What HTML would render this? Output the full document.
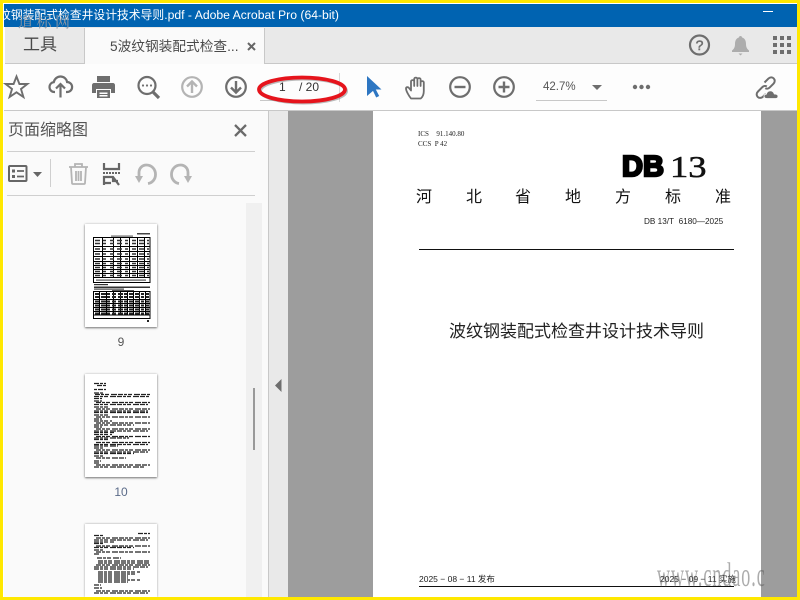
<!DOCTYPE html>
<html lang="zh">
<head>
<meta charset="utf-8">
<title>Acrobat</title>
<style>
html,body{margin:0;padding:0;width:800px;height:600px;overflow:hidden;background:#fff}
body{position:relative;font-family:"Liberation Sans","Noto Sans CJK SC",sans-serif;color:#4b4b4b}
.a{position:absolute;white-space:nowrap}
svg{position:absolute;overflow:visible}
.i{fill:none;stroke:#6e6e6e;stroke-width:2.2}
.l{color:#222}
.h{font-size:16px;line-height:20px;top:185px;font-family:"Noto Sans CJK SC",sans-serif;font-weight:400;color:#111}
</style>
</head>
<body>
<!-- Title bar -->
<div class="a" style="left:4px;top:4px;width:793px;height:23px;background:#0063b1;overflow:hidden">
  <div class="a" style="right:458px;top:1px;font-size:12.200px;line-height:20px;color:#fff"><span style="font-size:11.800px">5波纹钢装配式检查井设计技术导则</span>.pdf - Adobe Acrobat Pro (64-bit)</div>
  <div class="a" style="left:759px;top:7px;width:10px;height:1px;background:#fff"></div>
</div>
<!-- Tab row -->
<div class="a" style="left:5px;top:27px;width:792px;height:36px;background:#e9e9e9"></div>
<div class="a" style="left:5px;top:63px;width:792px;height:1px;background:#c8c8c8"></div>
<div class="a" style="left:84px;top:28px;width:181px;height:36px;background:#fafafa;border-left:1px solid #c8c8c8;border-right:1px solid #c8c8c8;box-sizing:border-box"></div>
<div class="a" style="left:23px;top:33px;font-size:17px;line-height:24px;color:#4a4a4a">工具</div>
<div class="a" style="left:110px;top:37px;font-size:13.700px;line-height:20px;color:#4a4a4a">5波纹钢装配式检查...</div>
<svg style="left:247px;top:42px" width="9" height="9"><path d="M1 1L8 8M8 1L1 8" stroke="#666" stroke-width="2"/></svg>
<!-- Right tab icons -->
<svg style="left:688px;top:34px" width="24" height="24"><circle cx="11.500" cy="11" r="9.500" class="i"/><text x="11.500" y="16" font-size="14" text-anchor="middle" fill="#6e6e6e" stroke="#6e6e6e" stroke-width=".5" font-family="Liberation Sans">?</text></svg>
<svg style="left:731px;top:35px" width="20" height="22"><path d="M9.500 1c1 0 1.400.6 1.500 1.400C14 3.400 15 6 15 9c0 3 1 5 3 6.500V17H1v-1.500C3 14 4 12 4 9c0-3 1-5.600 4-6.600C8.100 1.600 8.500 1 9.500 1zM7.500 18.500h4L9.500 20.500z" fill="#adadad"/></svg>
<svg style="left:772px;top:36px" width="20" height="20" fill="#6e6e6e"><rect x="1" y="0" width="4" height="4"/><rect x="8" y="0" width="4" height="4"/><rect x="15" y="0" width="4" height="4"/><rect x="1" y="7" width="4" height="4"/><rect x="8" y="7" width="4" height="4"/><rect x="15" y="7" width="4" height="4"/><rect x="1" y="14" width="4" height="4"/><rect x="8" y="14" width="4" height="4"/><rect x="15" y="14" width="4" height="4"/></svg>
<!-- Toolbar -->
<div class="a" style="left:4px;top:64px;width:793px;height:46px;background:#fdfdfd"></div>
<div class="a" style="left:4px;top:110px;width:793px;height:1px;background:#c8c8c8"></div>
<svg style="left:5px;top:75px" width="24" height="24"><path d="M11.500 1.500l2.900 7.500h8l-6.400 5 2.400 8-6.900-4.700-6.900 4.700 2.400-8-6.400-5h8z" fill="none" stroke="#6e6e6e" stroke-width="1.900"/></svg>
<svg style="left:48px;top:75px" width="26" height="24"><path d="M7 17H6.500C3.500 17 1.500 14.800 1.500 12c0-2.600 1.800-4.600 4.300-4.900C6.500 4 9 1.500 12.500 1.500c3.400 0 6 2.400 6.600 5.500 2.900.1 5 2.300 5 5 0 2.900-2.100 5-5 5H18" class="i"/><path d="M12.500 22.500V9.500M8 13.500l4.500-4.500 4.500 4.500" class="i"/></svg>
<svg style="left:92px;top:76px" width="23" height="22"><path d="M5 0h13v6H5zM2 7h19c1 0 2 1 2 2v8h-4v-4H4v4H0V9c0-1 1-2 2-2zM5 14h13v8H5z" fill="#6e6e6e"/><rect x="7.500" y="16.500" width="8" height="1.500" fill="#fff"/><rect x="7.500" y="19" width="8" height="1.500" fill="#fff"/></svg>
<svg style="left:137px;top:76px" width="24" height="24"><circle cx="10" cy="9.500" r="8.500" class="i"/><path d="M16 16l6 6" stroke="#6e6e6e" stroke-width="3.200"/><circle cx="6" cy="9.500" r="1.100" fill="#6e6e6e"/><circle cx="10" cy="9.500" r="1.100" fill="#6e6e6e"/><circle cx="14" cy="9.500" r="1.100" fill="#6e6e6e"/></svg>
<svg style="left:181px;top:76px" width="22" height="22"><circle cx="11" cy="11" r="9.800" fill="none" stroke="#b4b4b4" stroke-width="2.200"/><path d="M11 17V5.500M6 10.500l5-5 5 5" fill="none" stroke="#b4b4b4" stroke-width="2.400"/></svg>
<svg style="left:225px;top:76px" width="22" height="22"><circle cx="11" cy="11" r="9.800" class="i"/><path d="M11 5v11.500M6 11.500l5 5 5-5" fill="none" stroke="#6e6e6e" stroke-width="2.400"/></svg>
<div class="a" style="left:279px;top:79px;font-size:12px;line-height:16px;color:#333">1</div>
<div class="a" style="left:299px;top:79px;font-size:12px;line-height:16px;color:#333">/ 20</div>
<div class="a" style="left:260px;top:100px;width:36px;height:1px;background:#c8c8c8"></div>
<div class="a" style="left:339px;top:73px;width:1px;height:29px;background:#d8d8d8"></div>
<svg style="left:250px;top:70px" width="106" height="40"><ellipse cx="53.500" cy="21" rx="43" ry="12" fill="none" stroke="#777" stroke-width="3" opacity=".5"/><ellipse cx="52" cy="19.500" rx="43" ry="12" fill="none" stroke="#e6141c" stroke-width="3.800"/></svg>
<svg style="left:367px;top:76px" width="15" height="22"><path d="M0 0l14.500 13.500H8.800l3.400 6.500-3 1.500-3.200-6.600L0 20z" fill="#2d76c2"/></svg>
<svg style="left:405px;top:76px" width="23" height="24"><path d="M6 22.500C4 20 1 15 1 12.500c0-1.500 2-1.800 3-.5l2 2.500V5.500c0-1.800 3.200-1.800 3.200 0V10 3c0-1.800 3.200-1.800 3.200 0v7V3.500c0-1.800 3.200-1.800 3.200 0V10V6.500c0-1.800 3.200-1.800 3.200 0V15c0 3.500-1 5.800-3 7.500z" fill="none" stroke="#6e6e6e" stroke-width="1.800" stroke-linejoin="round"/></svg>
<svg style="left:449px;top:76px" width="22" height="22"><circle cx="11" cy="11" r="9.800" class="i"/><path d="M5.500 11h11" stroke="#6e6e6e" stroke-width="2.400"/></svg>
<svg style="left:493px;top:76px" width="22" height="22"><circle cx="11" cy="11" r="9.800" class="i"/><path d="M5.500 11h11M11 5.500v11" stroke="#6e6e6e" stroke-width="2.400"/></svg>
<div class="a" style="left:543px;top:79px;font-size:11.500px;line-height:16px;color:#555">42.7%</div>
<svg style="left:592px;top:85px" width="10" height="6"><path d="M0 0h10L5 5z" fill="#6e6e6e"/></svg>
<div class="a" style="left:536px;top:100px;width:71px;height:1px;background:#c8c8c8"></div>
<svg style="left:632px;top:84px" width="20" height="6" fill="#6e6e6e"><circle cx="3" cy="3" r="2.200"/><circle cx="9.500" cy="3" r="2.200"/><circle cx="16" cy="3" r="2.200"/></svg>
<svg style="left:754px;top:75px" width="28" height="25">
  <path d="M10.500 7.500l3.800-3.800c1.700-1.700 4-1.700 5.400-.3s1.400 3.700-.3 5.400l-3.800 3.800c-1.200 1.200-3 1.400-4.300.6" fill="none" stroke="#6e6e6e" stroke-width="2"/>
  <path d="M12.800 11.500c-1.300-.9-3.100-.7-4.300.5l-4.500 4.500c-1.700 1.700-1.700 4-.3 5.400s3.700 1.400 5.400-.3l2.700-2.700" fill="none" stroke="#6e6e6e" stroke-width="2"/>
  <path d="M13 23.500c-2 0-3-.8-3-2.200 0-1.300 1-2.100 2.300-2.100.6-2.200 2-3.400 3.900-3.400 2.200 0 3.600 1.300 4.100 3.200 2.400 0 3.700.8 3.700 2.200 0 1.500-1 2.300-2.300 2.300z" fill="#6e6e6e" stroke="#fdfdfd" stroke-width=".8"/>
</svg>

<!-- Left pane -->
<div class="a" style="left:4px;top:111px;width:264px;height:486px;background:#fafafa"></div>
<div class="a" style="left:8px;top:120px;font-size:16px;line-height:22px;color:#555">页面缩略图</div>
<svg style="left:234px;top:124px" width="13" height="13"><path d="M1 1L12 12M12 1L1 12" stroke="#6a6a6a" stroke-width="2.300"/></svg>
<div class="a" style="left:7px;top:151px;width:248px;height:1px;background:#cfcfcf"></div>
<div class="a" style="left:7px;top:195px;width:248px;height:1px;background:#cfcfcf"></div>
<div class="a" style="left:50px;top:159px;width:1px;height:28px;background:#cfcfcf"></div>
<svg style="left:8px;top:165px" width="20" height="17"><rect x="1" y="1" width="17.500" height="15" rx="1" fill="none" stroke="#666" stroke-width="2"/><rect x="4" y="4.500" width="3" height="3" fill="#666"/><rect x="4" y="10" width="3" height="3" fill="#666"/><path d="M9 6h7M9 11.500h7" stroke="#666" stroke-width="1.800"/></svg>
<svg style="left:33px;top:172px" width="9" height="5"><path d="M0 0h9L4.500 5z" fill="#666"/></svg>
<svg style="left:68px;top:162px" width="21" height="23"><path d="M1 5h19M7 5V2h7v3M3 5l1 16c0 .8.500 1 1 1h11c.5 0 1-.2 1-1l1-16M8 9v10M10.500 9v10M13 9v10" fill="none" stroke="#b4b4b4" stroke-width="1.800"/></svg>
<svg style="left:103px;top:163px" width="18" height="22"><path d="M1 0v6h15V0" fill="none" stroke="#666" stroke-width="2.200"/><path d="M0 10h17" stroke="#666" stroke-width="2" stroke-dasharray="2 1"/><path d="M1 22v-8h9l6 8M10 14v4h5M1 20h7" fill="none" stroke="#666" stroke-width="2.200"/></svg>
<svg style="left:135px;top:163px" width="23" height="22"><path d="M13 20.500c4-.6 7.500-4 7.500-9C20.500 6 16.500 2 11.500 2 7 2 4 5.500 4 9.500V14" fill="none" stroke="#b4b4b4" stroke-width="2.800"/><path d="M0 13h8l-4 7z" fill="#b4b4b4"/></svg>
<svg style="left:169px;top:163px" width="23" height="22"><path d="M10 20.500c-4-.6-7.500-4-7.500-9C2.500 6 6.500 2 11.500 2 16 2 19 5.500 19 9.500V14" fill="none" stroke="#b4b4b4" stroke-width="2.800"/><path d="M23 13h-8l4 7z" fill="#b4b4b4"/></svg>
<!-- Scroll -->
<div class="a" style="left:246px;top:203px;width:16px;height:394px;background:#f0f0f0"></div>
<div class="a" style="left:253px;top:388px;width:2px;height:62px;background:#999"></div>
<!-- Thumbs -->
<div class="a" style="left:85px;top:224px;width:72px;height:103px;background:#fff;box-shadow:0 1px 2px #777,0 0 2px #ccc"></div>
<svg style="left:85px;top:224px" width="72" height="103">
  <rect x="52" y="9" width="13" height="1.500" fill="#444"/>
  <rect x="26" y="11.500" width="22" height="1.200" fill="#666"/>
  <g stroke="#000" stroke-width="1" fill="none">
    <path d="M8.500 13.500h56.500v45H8.500zM8.500 22.500h56.500M8.500 27.500h56.500M8.500 32.500h56.500M8.500 37.500h56.500M8.500 41.500h56.500M8.500 45.500h56.500M8.500 49.500h56.500M8.500 53.500h56.500"/>
    <path d="M17.500 13.500v40M28.500 13.500v40M35.500 13.500v40M44.500 13.500v40M52.500 13.500v40M59.500 13.500v40"/>
  </g>
  <g stroke="#333" stroke-width="1.600" stroke-dasharray="5 3 3 4 4 3" fill="none">
    <path d="M10 16.500h54M10 19.500h54M10 25h54M10 30h54M10 35h54M10 39.500h54M10 43.500h54M10 47.500h54M10 51.500h54"/>
  </g>
  <rect x="11" y="55.500" width="50" height="1.200" fill="#555"/>
  <rect x="9" y="60" width="14" height="1.200" fill="#333"/>
  <rect x="9" y="62.500" width="56" height="1.500" fill="#333"/>
  <rect x="9" y="64.500" width="30" height="1.200" fill="#444"/>
  <rect x="27" y="66" width="22" height="1.200" fill="#555"/>
  <g stroke="#000" stroke-width="1" fill="none">
    <path d="M8.500 67.500h56.500v27H8.500zM8.500 75.500h56.500M8.500 79.500h56.500M8.500 83.500h56.500M8.500 87.500h56.500M8.500 91h56.500"/>
    <path d="M14.500 67.500v24M21.500 67.500v24M28.500 67.500v24M35.500 67.500v24M42.500 67.500v24M48.500 67.500v24M54.500 67.500v24M60.500 67.500v24"/>
  </g>
  <g stroke="#222" stroke-width="2" stroke-dasharray="4 2 5 1 3 2" fill="none">
    <path d="M10 70h54M10 73h54M10 77.500h54M10 81.500h54M10 85.500h54M10 89.500h54"/>
  </g>
  <rect x="62" y="96" width="2" height="2" fill="#222"/>
</svg>
<div class="a" style="left:85px;top:334px;width:72px;text-align:center;font-size:12px;line-height:16px;color:#555">9</div>
<div class="a" style="left:85px;top:374px;width:72px;height:103px;background:#fff;box-shadow:0 1px 2px #777,0 0 2px #ccc"></div>
<svg style="left:85px;top:374px" width="72" height="103" stroke="#222" stroke-width="1.200" stroke-dasharray="5 1 3 1 4 2 6 1">
  <path d="M9 9.500h12M12 11.500h10M9 15.500h3M13 15.500h8"/>
  <path d="M9 19h9M10 20.500h55M9 22.500h55M9 24.500h8"/>
  <path d="M9 27h8M11 28.500h54M9 30.500h54"/>
  <path d="M9 33h16M11 35h54M9 37h54M9 38.500h54"/>
  <path d="M9 41h16M11 43h54M9 45h8"/>
  <path d="M9 47h18M11 49h54M9 51h40"/>
  <path d="M9 53h8M11 55h54M9 57h54M9 58.500h20"/>
  <path d="M9 60.500h18M11 62.500h54M9 64h35"/>
  <path d="M9 65.500h14M11 68.500h54M9 70.500h54M9 72h24"/>
  <path d="M9 74h9M11 76h54M9 78h54M9 79.500h40"/>
  <path d="M9 82h10M11 84h30"/>
  <path d="M9 87h7M9 89h5M11 91h54M9 93h50"/>
</svg>
<div class="a" style="left:85px;top:484px;width:72px;text-align:center;font-size:12px;line-height:16px;color:#5a6a88">10</div>
<div class="a" style="left:85px;top:524px;width:72px;height:73px;background:#fff;box-shadow:0 0 2px #999;overflow:hidden"></div>
<svg style="left:85px;top:524px" width="72" height="72" stroke="#222" stroke-width="1.200" stroke-dasharray="5 1 3 1 4 2 6 1">
  <path d="M9 11.500h10M53 9.500h12M11 14h54M9 16h54M9 18h20"/>
  <path d="M9 19.500h10M11 22h54M9 23.500h40"/>
  <path d="M9 26h10M11 28h54M9 30h6"/>
  <path d="M12 34h24M13 37h52M13 39h52M11 41h54M9 43h54M9 45h40"/>
  <path d="M13 48h42M13 50h38M13 52h30M13 54h30M13 56h42M13 58h30"/>
  <path d="M9 61h7M9 64h8M11 67h54M9 69h54"/>
</svg>
<!-- Splitter -->
<div class="a" style="left:268px;top:111px;width:1px;height:486px;background:#c8c8c8"></div>
<div class="a" style="left:269px;top:111px;width:19px;height:486px;background:#e9e9e9"></div>
<svg style="left:275px;top:379px" width="7" height="13"><path d="M6.500 0v13L0 6.500z" fill="#6e6e6e"/></svg>
<!-- Document area -->
<div class="a" style="left:288px;top:111px;width:509px;height:486px;background:#9d9d9d"></div>
<div class="a" style="left:373px;top:111px;width:388px;height:486px;background:#fff"></div>
<div class="a l" style="left:418px;top:130px;font:7px/8px 'Liberation Serif','Noto Serif CJK SC',serif;word-spacing:2px">ICS&nbsp;&nbsp;91.140.80</div>
<div class="a l" style="left:418px;top:140px;font:7px/8px 'Liberation Serif','Noto Serif CJK SC',serif">CCS&nbsp;&nbsp;P 42</div>
<div class="a" style="left:622px;top:151px;font:900 29px/32px 'Liberation Sans',sans-serif;color:#000;-webkit-text-stroke:2.400px #000">DB</div>
<div class="a" style="left:670px;top:150px;font:31px/34px 'Liberation Serif',serif;color:#111;-webkit-text-stroke:.5px #111;transform:scaleX(1.180);transform-origin:left top">13</div>
<div class="a h" style="left:416px">河</div>
<div class="a h" style="left:466px">北</div>
<div class="a h" style="left:515px">省</div>
<div class="a h" style="left:565px">地</div>
<div class="a h" style="left:615px">方</div>
<div class="a h" style="left:665px">标</div>
<div class="a h" style="left:715px">准</div>
<div class="a l" style="left:644px;top:217px;font-size:8.200px;line-height:10px">DB 13/T&nbsp;&nbsp;6180—2025</div>
<div class="a" style="left:419px;top:249px;width:315px;height:1px;background:#111"></div>
<div class="a l" style="left:449px;top:322px;font-size:17px;line-height:20px">波纹钢装配式检查井设计技术导则</div>
<div class="a l" style="left:419px;top:573px;font-size:8.500px;line-height:12px">2025 − 08 − 11 发布</div>
<div class="a l" style="left:660px;top:573px;font-size:8.500px;line-height:12px">2025 − 09 − 11 实施</div>
<div class="a" style="left:419px;top:586px;width:315px;height:1px;background:#111"></div>
<!-- Watermarks -->
<div class="a" style="left:18px;top:13px;font:15px/18px 'Noto Serif CJK SC',serif;color:#8d97a3;letter-spacing:3.500px">道标网</div>
<div class="a" style="left:657px;top:570px;font:18px/20px 'Liberation Serif',serif;color:rgba(90,90,90,.5);letter-spacing:1px;transform:scaleY(1.850);transform-origin:left 16px">www.cndao.c</div>
<!-- Yellow frame -->
<div class="a" style="left:0;top:0;width:800px;height:3px;background:#ffe800"></div>
<div class="a" style="left:0;top:597px;width:800px;height:3px;background:#ffe800"></div>
<div class="a" style="left:0;top:0;width:3px;height:600px;background:#ffe800"></div>
<div class="a" style="left:797px;top:0;width:3px;height:600px;background:#ffe800"></div>
</body>
</html>
